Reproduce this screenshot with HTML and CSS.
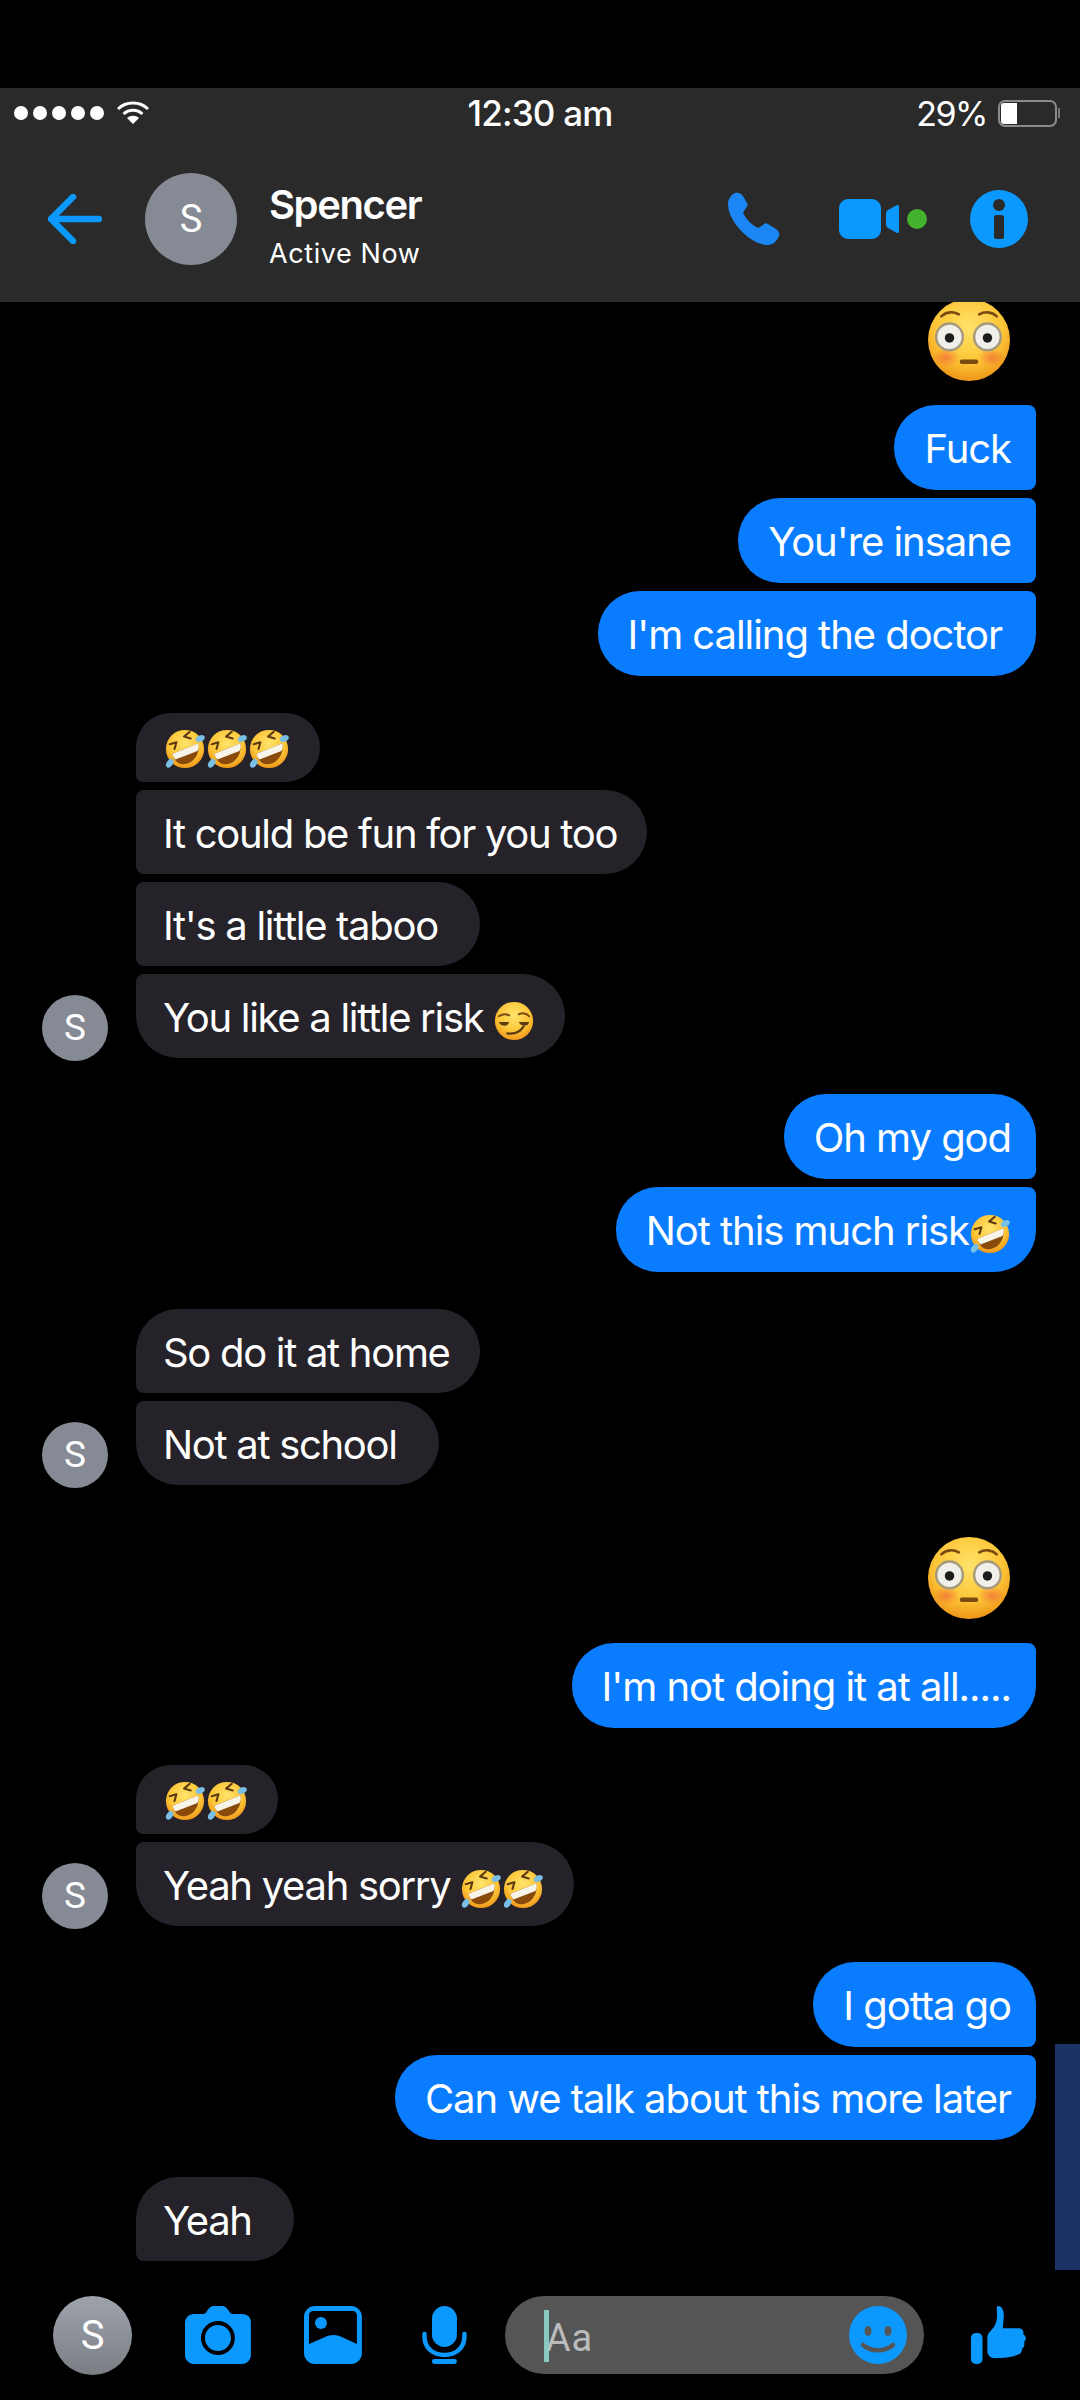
FILE: index.html
```html
<!DOCTYPE html>
<html lang="en">
<head>
    <meta charset="UTF-8">
    <meta name="viewport" content="width=device-width, initial-scale=1.0">
    <title>Spencer - Chat</title>
    <link rel="stylesheet" href="styles.css">
</head>
<body>

<!-- shared emoji drawings -->
<svg class="defs" width="0" height="0">
    <defs>
        <radialGradient id="face" cx="50%" cy="35%" r="70%">
            <stop offset="0" stop-color="#ffe36b"/>
            <stop offset="0.6" stop-color="#fcc536"/>
            <stop offset="1" stop-color="#ec8c14"/>
        </radialGradient>
        <radialGradient id="blush" cx="50%" cy="50%" r="50%">
            <stop offset="0" stop-color="#f2603c" stop-opacity="0.65"/>
            <stop offset="1" stop-color="#f2603c" stop-opacity="0"/>
        </radialGradient>
        <symbol id="flushed" viewBox="0 0 80 80">
            <circle cx="40" cy="40" r="40" fill="url(#face)"/>
            <ellipse cx="18" cy="57" rx="13" ry="9" fill="url(#blush)"/>
            <ellipse cx="62" cy="57" rx="13" ry="9" fill="url(#blush)"/>
            <path d="M13 17c5-5 12-5 17-2" fill="none" stroke="#7a4a12" stroke-width="2.6" stroke-linecap="round"/>
            <path d="M50 15c5-3 12-3 17 2" fill="none" stroke="#7a4a12" stroke-width="2.6" stroke-linecap="round"/>
            <circle cx="21" cy="37" r="13" fill="#f1efe9" stroke="#a79a7c" stroke-width="2.4"/>
            <circle cx="58" cy="37" r="13" fill="#f1efe9" stroke="#a79a7c" stroke-width="2.4"/>
            <circle cx="21" cy="38" r="4.6" fill="#1c1c1c"/>
            <circle cx="58" cy="38" r="4.6" fill="#1c1c1c"/>
            <rect x="31" y="59" width="18" height="4.4" rx="2" fill="#7a4a12"/>
        </symbol>
        <symbol id="rofl" viewBox="0 0 44 44">
            <circle cx="22" cy="22" r="20" fill="url(#face)"/>
            <path d="M9 27 36 16c2 12-6 22-16 22-6 0-10-5-11-11z" fill="#8a4a0c"/>
            <path d="M9 27 36 16c1 4 0 7-1 8L12 33c-2-2-3-4-3-6z" fill="#f7f4ea"/>
            <path d="M6 17l7-2-2 7" fill="none" stroke="#5d3a10" stroke-width="2.2" stroke-linecap="round" stroke-linejoin="round"/>
            <path d="M27 4l-6 5 7 2" fill="none" stroke="#5d3a10" stroke-width="2.2" stroke-linecap="round" stroke-linejoin="round"/>
            <ellipse cx="38" cy="11" rx="5" ry="3.2" fill="#79bfe6" transform="rotate(-25 38 11)"/>
            <ellipse cx="6" cy="37" rx="3.2" ry="5" fill="#79bfe6" transform="rotate(35 6 37)"/>
        </symbol>
        <symbol id="smirk" viewBox="0 0 44 44">
            <circle cx="22" cy="22" r="20" fill="url(#face)"/>
            <path d="M6 17c3-2 7-3 11-1M27 15c4-2 8-1 11 2" fill="none" stroke="#7a4a12" stroke-width="2" stroke-linecap="round"/>
            <path d="M6 23h11c-1 3-3 4-5 4s-5-1-6-4zM27 23h11c-1 3-3 4-5 4s-5-1-6-4z" fill="#5d3a10"/>
            <path d="M15 35c7 1 13-1 17-7" fill="none" stroke="#5d3a10" stroke-width="2.4" stroke-linecap="round"/>
        </symbol>
    </defs>
</svg>

<div class="phone">
    <header class="top">
        <div class="status">
            <div class="status-left">
                <div class="signal"><i></i><i></i><i></i><i></i><i></i></div>
                <svg class="wifi" viewBox="0 0 32 24">
                    <path d="M1 8C9 0 23 0 31 8" fill="none" stroke="#fff" stroke-width="3"/>
                    <path d="M6.500 13C12 8 20 8 25.500 13" fill="none" stroke="#fff" stroke-width="3"/>
                    <path d="M16 23 10 17c3.500-3 8.500-3 12 0z" fill="#fff"/>
                </svg>
            </div>
            <div class="clock">12:30 am</div>
            <div class="status-right">
                <span>29%</span>
                <div class="battery"><div class="battery-fill"></div></div>
                <div class="battery-tip"></div>
            </div>
        </div>
        <div class="nav">
            <svg class="back" viewBox="0 0 54 50">
                <path d="M25 3 3 25l22 22M3 25h48" fill="none" stroke="#0c99ff" stroke-width="6.500" stroke-linecap="round" stroke-linejoin="round"/>
            </svg>
            <div class="avatar avatar-big">S</div>
            <div class="who">
                <div class="who-name">Spencer</div>
                <div class="who-state">Active Now</div>
            </div>
            <div class="nav-actions">
                <svg class="ic-phone" viewBox="0 0 54 54">
                    <path d="M8 1c3-1 6 0 8 3l4 7c1 2 1 3-1 5l-2 3c-1 1-1 2 0 4 3 5 7 9 12 12 2 1 3 1 4 0l3-2c2-2 3-2 5-1l8 5c3 2 4 5 3 7-2 5-6 9-11 9C24 53 1 30 1 12 1 7 4 3 8 1z" fill="#1b86f4"/>
                </svg>
                <svg class="ic-video" viewBox="0 0 90 42">
                    <rect x="0" y="1" width="42" height="40" rx="9" fill="#0c99ff"/>
                    <path d="M47 15c0-1 1-2 2-3l9-5c1 0 2 0 2 2v24c0 2-1 2-2 2l-9-5c-1-1-2-2-2-3z" fill="#0c99ff"/>
                    <circle cx="78" cy="21" r="10" fill="#42b22f"/>
                </svg>
                <svg class="ic-info" viewBox="0 0 58 58">
                    <circle cx="29" cy="29" r="29" fill="#0c99ff"/>
                    <circle cx="29" cy="15" r="6" fill="#2a2a2a"/>
                    <rect x="24" y="25" width="10" height="24" rx="2.500" fill="#2a2a2a"/>
                </svg>
            </div>
        </div>
    </header>

    <main class="chat">
        <div class="group group-me">
            <svg class="big-emoji big-emoji-cut"><use href="#flushed"/></svg>
            <div class="msg me mid">Fuck</div>
            <div class="msg me mid">You're insane</div>
            <div class="msg me last pad-end-me">I'm calling the doctor</div>
        </div>

        <div class="group group-them">
            <div class="msg them first short"><svg class="emoji"><use href="#rofl"/></svg><svg class="emoji"><use href="#rofl"/></svg><svg class="emoji"><use href="#rofl"/></svg></div>
            <div class="msg them mid">It could be fun for you too</div>
            <div class="msg them mid pad-end">It's a little taboo</div>
            <div class="msg them last">You like a little risk <svg class="emoji"><use href="#smirk"/></svg></div>
            <div class="avatar avatar-small">S</div>
        </div>

        <div class="group group-me">
            <div class="msg me first">Oh my god</div>
            <div class="msg me last">Not this much risk<svg class="emoji"><use href="#rofl"/></svg></div>
        </div>

        <div class="group group-them">
            <div class="msg them first">So do it at home</div>
            <div class="msg them last pad-end">Not at school</div>
            <div class="avatar avatar-small">S</div>
        </div>

        <div class="group group-me">
            <svg class="big-emoji"><use href="#flushed"/></svg>
            <div class="msg me last">I'm not doing it at all.....</div>
        </div>

        <div class="group group-them">
            <div class="msg them first short"><svg class="emoji"><use href="#rofl"/></svg><svg class="emoji"><use href="#rofl"/></svg></div>
            <div class="msg them last">Yeah yeah sorry <svg class="emoji"><use href="#rofl"/></svg><svg class="emoji"><use href="#rofl"/></svg></div>
            <div class="avatar avatar-small">S</div>
        </div>

        <div class="group group-me">
            <div class="msg me first">I gotta go</div>
            <div class="msg me last">Can we talk about this more later</div>
        </div>

        <div class="group group-them">
            <div class="msg them first pad-end">Yeah</div>
            <div class="sliver"></div>
        </div>

        <div class="scrollbar"></div>
    </main>

    <footer class="composer">
        <div class="avatar avatar-me">S</div>
        <svg class="ic-camera" viewBox="0 0 66 58">
            <path d="M9 8h9c2 0 3-1 4-3 2-3 4-5 7-5h8c3 0 5 2 7 5 1 2 2 3 4 3h9c5 0 9 3 9 8v33c0 5-4 9-9 9H9c-5 0-9-4-9-9V17c0-5 4-9 9-9z" fill="#0c99ff"/>
            <circle cx="33" cy="32" r="15" fill="none" stroke="#000" stroke-width="4"/>
        </svg>
        <svg class="ic-image" viewBox="0 0 58 58">
            <rect width="58" height="58" rx="11" fill="#0c99ff"/>
            <path d="M9 5h40c2 0 4 2 4 4v29L40 32c-7-4-14-4-21 0L5 38V9c0-2 2-4 4-4z" fill="#000"/>
            <circle cx="17" cy="17" r="6" fill="#0c99ff"/>
        </svg>
        <svg class="ic-mic" viewBox="0 0 45 58">
            <rect x="10" y="0" width="25" height="41" rx="12.500" fill="#0c99ff"/>
            <path d="M2.500 28v3c0 11 9 18 20 18s20-7 20-18v-3" fill="none" stroke="#0c99ff" stroke-width="4.500" stroke-linecap="round"/>
            <rect x="10" y="53" width="25" height="5" rx="2.500" fill="#0c99ff"/>
        </svg>
        <div class="field">
            <div class="field-text"><span class="caret"></span>Aa</div>
            <svg class="ic-smile" viewBox="0 0 58 58">
                <circle cx="29" cy="29" r="29" fill="#0c99ff"/>
                <ellipse cx="19" cy="25" rx="3.500" ry="5" fill="#555"/>
                <ellipse cx="39" cy="25" rx="3.500" ry="5" fill="#555"/>
                <path d="M14 39c8 7 22 7 30 0" fill="none" stroke="#555" stroke-width="4.500" stroke-linecap="round"/>
            </svg>
        </div>
        <svg class="ic-like" viewBox="0 0 58 60">
            <rect x="0" y="28" width="12" height="32" rx="5" fill="#0c99ff"/>
            <path d="M28 0c4 0 6 4 6 10 0 6-1 10-1 13h16c5 0 6 4 5 6 3 2 4 5 1 8 1 3 0 6-2 7 0 4-2 6-6 7-5 2-14 3-22 3-5 0-8-3-8-8V33c0-3 1-5 3-7 5-5 7-9 7-17 0-4-1-9 1-9z" fill="#0c99ff"/>
        </svg>
    </footer>
</div>

</body>
</html>
```

FILE: styles.css
```css
* {
    box-sizing: border-box;
}

body {
    background-color: #000;
    color: #fff;
    font-family: Inter, "Liberation Sans", sans-serif;
    margin: 0;
    padding: 0;
}

.defs {
    display: block;
    height: 0;
}

.phone {
    width: 1080px;
    height: 2400px;
    padding-top: 88px;
    overflow: hidden;
    display: flex;
    flex-direction: column;
}

/* header */
.top {
    background-color: #2a2a2a;
    height: 214px;
    flex: none;
}

.status {
    display: grid;
    grid-template-columns: 1fr auto 1fr;
    align-items: center;
    height: 50px;
    padding: 0 14px;
    font-size: 34px;
}

.status-left, .status-right {
    display: flex;
    align-items: center;
}

.status-right {
    justify-content: flex-end;
    letter-spacing: -1.5px;
    padding-right: 6px;
}

.signal {
    display: flex;
    gap: 5px;
}

.signal i {
    display: block;
    width: 14px;
    height: 14px;
    background-color: #fff;
    border-radius: 50%;
}

.wifi {
    width: 32px;
    height: 24px;
    margin-left: 13px;
}

.clock {
    font-size: 35px;
    font-weight: 500;
    letter-spacing: -0.8px;
}

.status-right span {
    margin-right: 11px;
}

.battery {
    width: 59px;
    height: 27px;
    border: 2px solid #8b8b8b;
    border-radius: 7px;
    padding: 1px;
}

.battery-fill {
    width: 16px;
    height: 100%;
    background-color: #fff;
    border-radius: 3px 0 0 3px;
}

.battery-tip {
    width: 2px;
    height: 10px;
    margin-left: 1px;
    background-color: #777;
}

.nav {
    display: flex;
    align-items: center;
    height: 116px;
    margin-top: 23px;
    padding: 0 52px 0 48px;
}

.back {
    width: 54px;
    height: 50px;
    flex: none;
}

.avatar {
    display: flex;
    align-items: center;
    justify-content: center;
    border-radius: 50%;
    background-color: #868a94;
    flex: none;
    font-family: Roboto, sans-serif;
}

.avatar-big {
    width: 92px;
    height: 92px;
    margin-left: 43px;
    font-size: 38px;
}

.who {
    margin-left: 32px;
    padding-top: 14px;
    flex: 1;
}

.who-name {
    font-size: 40px;
    line-height: 48px;
    font-weight: 600;
    letter-spacing: -1.4px;
}

.who-state {
    font-size: 27px;
    line-height: 34px;
    margin-top: 8px;
    letter-spacing: 0.6px;
}

.nav-actions {
    display: flex;
    align-items: center;
}

.ic-phone {
    width: 54px;
    height: 54px;
}

.ic-video {
    width: 90px;
    height: 42px;
    margin-left: 58px;
}

.ic-info {
    width: 58px;
    height: 58px;
    margin-left: 41px;
}

/* messages */
.chat {
    position: relative;
    height: 1968px;
    flex: none;
    overflow: hidden;
}

.group {
    display: flex;
    flex-direction: column;
    gap: 8px;
    position: relative;
    margin-bottom: 36.5px;
}

.group-me {
    align-items: flex-end;
    padding-right: 44px;
}

.group-them {
    align-items: flex-start;
    padding-left: 136px;
}

.msg {
    height: 84px;
    padding: 0 30px 0 27px;
    border-radius: 42px;
    font-size: 40px;
    line-height: 88px;
    white-space: nowrap;
    letter-spacing: -1.3px;
}

.me {
    height: 85px;
    padding: 0 25px 0 30px;
    background-color: #0a7cff;
    letter-spacing: -1.05px;
}

.them {
    background-color: #252329;
}

.me.first {
    border-bottom-right-radius: 8px;
}

.me.mid {
    border-top-right-radius: 8px;
    border-bottom-right-radius: 8px;
}

.me.last {
    border-top-right-radius: 8px;
}

.them.first {
    border-bottom-left-radius: 8px;
}

.them.mid {
    border-top-left-radius: 8px;
    border-bottom-left-radius: 8px;
}

.them.last {
    border-top-left-radius: 8px;
}

.pad-end {
    padding-right: 42px;
}

.pad-end-me {
    padding-right: 34px;
}

.short {
    height: 69px;
    line-height: 65px;
    padding: 0 30px 0 28px;
}

.sliver {
    width: 126px;
    height: 4px;
    margin: 1px 0 0 4px;
    background-color: #2a292d;
}

.emoji {
    width: 42px;
    height: 42px;
    vertical-align: middle;
}

.big-emoji {
    width: 82px;
    height: 82px;
    margin: 16px 26px 16px 0;
    display: block;
}

.big-emoji-cut {
    margin-top: -3px;
    margin-bottom: 16px;
}

.avatar-small {
    position: absolute;
    left: 42px;
    bottom: -3px;
    width: 66px;
    height: 66px;
    font-size: 37px;
}

.scrollbar {
    position: absolute;
    right: 0;
    bottom: 0;
    width: 25px;
    height: 226px;
    background-color: #1b3465;
}

/* bottom bar */
.composer {
    display: flex;
    align-items: center;
    height: 130px;
    padding: 0 52px 0 53px;
    flex: none;
}

.avatar-me {
    width: 79px;
    height: 79px;
    font-size: 40px;
    background: linear-gradient(#9da2ac, #7b7e84);
}

.ic-camera {
    width: 66px;
    height: 58px;
    margin-left: 53px;
}

.ic-image {
    width: 58px;
    height: 58px;
    margin-left: 53px;
}

.ic-mic {
    width: 45px;
    height: 58px;
    margin-left: 60px;
}

.field {
    display: flex;
    align-items: center;
    justify-content: space-between;
    width: 420px;
    height: 78px;
    margin-left: 38px;
    padding: 0 17px 0 39px;
    border-radius: 39px;
    background-color: #555;
}

.field-text {
    position: relative;
    font-family: Roboto, sans-serif;
    font-size: 38px;
    color: #bbb;
    padding: 6px 0 0 2px;
    letter-spacing: 1px;
}

.caret {
    position: absolute;
    left: 0;
    top: 0;
    width: 5px;
    height: 52px;
    background-color: #8fd6cc;
    opacity: 0.9;
}

.ic-smile {
    width: 58px;
    height: 58px;
}

.ic-like {
    width: 58px;
    height: 58px;
    margin-left: 46px;
}
```
